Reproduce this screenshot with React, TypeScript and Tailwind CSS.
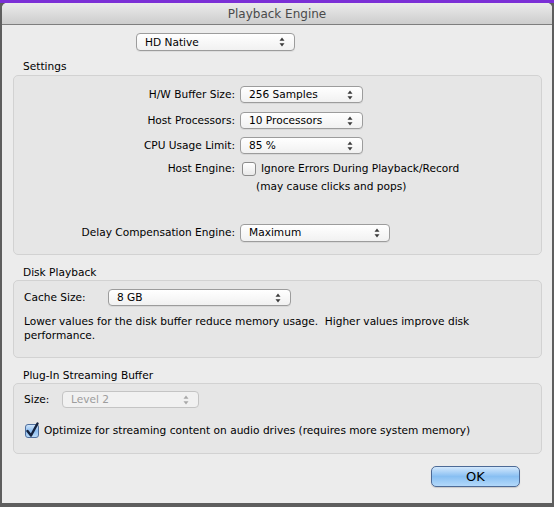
import React from 'react';

const font = { fontFamily: '"DejaVu Sans", "Liberation Sans", sans-serif' };

function Arrows({ dim }: { dim?: boolean }) {
  const c = dim ? '#a8a8a8' : '#3a3a3a';
  return (
    <svg width="6" height="10" viewBox="0 0 6 10" className="shrink-0">
      <path d="M3 0.5 L5.5 3.8 L0.5 3.8 Z" fill={c} />
      <path d="M3 9.5 L5.5 6.2 L0.5 6.2 Z" fill={c} />
    </svg>
  );
}

function Select({ value, className, disabled }: { value: string; className: string; disabled?: boolean }) {
  return (
    <div
      className={`h-[17px] rounded-[4px] border flex items-center justify-between pl-[8px] pr-[9px] text-[10.6px] leading-none ${
        disabled
          ? 'border-[#c4c4c4] bg-[#f1f1f1] text-[#9d9d9d]'
          : 'border-[#9c9c9c] bg-gradient-to-b from-white to-[#f1f1f1] text-black shadow-[0_1px_0_rgba(0,0,0,0.06)]'
      } ${className}`}
    >
      <span>{value}</span>
      <Arrows dim={disabled} />
    </div>
  );
}

function CheckBox({ checked }: { checked?: boolean }) {
  if (checked) {
    return (
      <div className="relative w-[14px] h-[14px] rounded-[3px] border border-[#4f6f9e] bg-gradient-to-b from-[#cfe4fa] via-[#8dbdf0] to-[#b9daf8] shrink-0">
        <svg width="14" height="16" viewBox="0 0 14 16" className="absolute -left-[1px] -top-[3px]">
          <path d="M2.5 9 L6 13.5 L12.5 1.5" fill="none" stroke="#14223e" strokeWidth="2.4" strokeLinecap="round" strokeLinejoin="round" />
        </svg>
      </div>
    );
  }
  return <div className="w-[14px] h-[14px] rounded-[3px] border border-[#8c8c8c] bg-gradient-to-b from-white to-[#e9e9e9] shrink-0" />;
}

function Row({ label, children }: { label: string; children: React.ReactNode }) {
  return (
    <div className="flex items-center">
      <div className="w-[226px] text-right pr-[5px] text-[10.6px] text-black">{label}</div>
      {children}
    </div>
  );
}

export default function App() {
  return (
    <div className="w-[554px] h-[507px] bg-[#5e5e5e] relative overflow-hidden text-[10.6px]" style={font}>
      <div className="h-[3px] bg-[#7b2fd6]" />
      <div className="ml-[2px] w-[550px] h-[500px] bg-[#ececec] rounded-t-[5px] overflow-hidden flex flex-col">
        {/* title bar */}
        <div className="h-[22px] bg-gradient-to-b from-[#ebebeb] to-[#cdcdcd] border-b border-[#7e7e7e] flex items-center justify-center text-[12px] text-[#4a4a4a] shrink-0">
          Playback Engine
        </div>

        <div className="pl-[11px] pr-[10px] flex flex-col">
          <Select value="HD Native" className="mt-[8px] ml-[123px] w-[159px] h-[18px]" />

          <div className="mt-[8px] ml-[10px] text-black leading-[15px]">Settings</div>
          <div className="mt-[1px] h-[180px] rounded-[5px] border border-[#d2d2d2] bg-[#e6e6e6] flex flex-col pt-[10px]">
            <Row label="H/W Buffer Size:">
              <Select value="256 Samples" className="w-[123px]" />
            </Row>
            <div className="mt-[9px]">
              <Row label="Host Processors:">
                <Select value="10 Processors" className="w-[123px]" />
              </Row>
            </div>
            <div className="mt-[8px]">
              <Row label="CPU Usage Limit:">
                <Select value="85 %" className="w-[123px]" />
              </Row>
            </div>
            <div className="mt-[7px]">
              <Row label="Host Engine:">
                <div className="flex items-center gap-[5px] ml-[2px] text-black">
                  <CheckBox />
                  <span>Ignore Errors During Playback/Record</span>
                </div>
              </Row>
            </div>
            <div className="mt-[2px] ml-[242px] text-black">(may cause clicks and pops)</div>
            <div className="mt-[29px]">
              <Row label="Delay Compensation Engine:">
                <Select value="Maximum" className="w-[150px] h-[18px]" />
              </Row>
            </div>
          </div>

          <div className="mt-[10px] ml-[10px] text-black leading-[15px]">Disk Playback</div>
          <div className="h-[78px] rounded-[5px] border border-[#d2d2d2] bg-[#e6e6e6] flex flex-col pt-[8px] pl-[10px]">
            <div className="flex items-center text-black">
              <span className="w-[84px]">Cache Size:</span>
              <Select value="8 GB" className="w-[183px]" />
            </div>
            <div className="mt-[8px] text-black leading-[14px] pr-[20px]">
              Lower values for the disk buffer reduce memory usage.&nbsp; Higher values improve disk performance.
            </div>
          </div>

          <div className="mt-[10px] ml-[10px] text-black leading-[15px]">Plug-In Streaming Buffer</div>
          <div className="h-[71px] rounded-[5px] border border-[#d2d2d2] bg-[#e6e6e6] flex flex-col pt-[7px] pl-[10px]">
            <div className="flex items-center text-black">
              <span className="w-[38px]">Size:</span>
              <Select value="Level 2" className="w-[137px]" disabled />
            </div>
            <div className="mt-[15px] flex items-center gap-[5px] ml-[1px] text-black">
              <CheckBox checked />
              <span>Optimize for streaming content on audio drives (requires more system memory)</span>
            </div>
          </div>

          <div className="mt-[12px] flex justify-end pr-[22px]">
            <button className="w-[89px] h-[21px] rounded-[5px] border border-[#4d6a96] bg-gradient-to-b from-[#d3e8fc] via-[#88bff2] to-[#b3d9fa] text-[13px] text-black leading-none flex items-center justify-center shadow-[0_1px_1px_rgba(0,0,0,0.15)]">
              OK
            </button>
          </div>
        </div>
      </div>
    </div>
  );
}
